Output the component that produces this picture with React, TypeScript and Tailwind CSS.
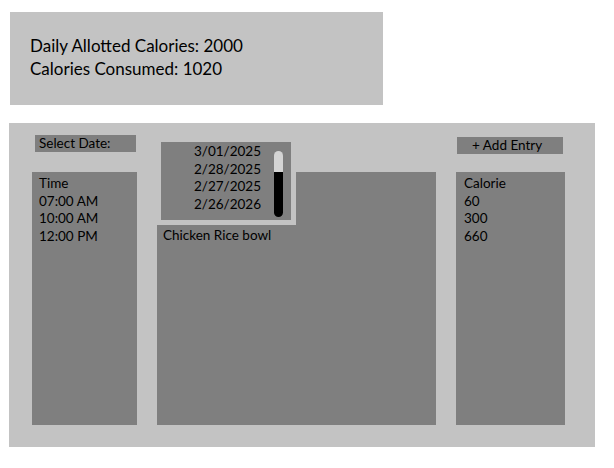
import React from "react";

const font = { fontFamily: "Lato, 'Open Sans', sans-serif" };

export default function App() {
  const times = ["Time", "07:00 AM", "10:00 AM", "12:00 PM"];
  const cals = ["Calorie", "60", "300", "660"];
  const dates = ["3/01/2025", "2/28/2025", "2/27/2025", "2/26/2026"];
  return (
    <div className="w-[614px] h-[468px] bg-white px-[9px] pt-[12px] text-black" style={font}>
      <div className="ml-[1px] w-[373px] h-[93px] bg-[#c3c3c3] pl-[20px] pt-[23px] text-[17px] leading-[22.7px]">
        <div>Daily Allotted Calories: 2000</div>
        <div>Calories Consumed: 1020</div>
      </div>
      <div className="mt-[18px] w-[586px] h-[324px] bg-[#c3c3c3] pl-[23px] pr-[30px] pb-[22px] flex gap-[20px] text-[13.5px] leading-[17.7px]">
        <div className="w-[105px] flex flex-col">
          <div className="h-[49px] pt-[12px] pl-[3px]">
            <div className="w-[101px] h-[17px] bg-[#7f7f7f] pl-[4px] leading-[17px]">Select Date:</div>
          </div>
          <div className="flex-1 bg-[#7f7f7f] pl-[7px] pt-[3px]">
            {times.map((t) => (
              <div key={t}>{t}</div>
            ))}
          </div>
        </div>
        <div className="w-[279px] flex flex-col relative">
          <div className="h-[49px]" />
          <div className="flex-1 bg-[#7f7f7f] pl-[6px] pt-[55px]">Chicken Rice bowl</div>
          <div className="absolute left-[-1px] top-[14px] border-[5px] border-[#c3c3c3]">
            <div className="w-[130px] h-[78px] bg-[#7f7f7f] relative pl-[33px] pt-[1px]">
              {dates.map((d) => (
                <div key={d}>{d}</div>
              ))}
              <div className="absolute left-[113px] top-[9px] w-[9px] flex flex-col">
                <div className="h-[21px] bg-[#d4d4d4] rounded-t-full rounded-b-[3px]" />
                <div className="h-[45px] bg-black rounded-b-full rounded-t-[2px]" />
              </div>
            </div>
          </div>
        </div>
        <div className="w-[109px] flex flex-col">
          <div className="h-[49px] pt-[14px] pl-[1px]">
            <div className="w-[106px] h-[17px] bg-[#7f7f7f] pl-[15px] leading-[17px]">+ Add Entry</div>
          </div>
          <div className="flex-1 bg-[#7f7f7f] pl-[8px] pt-[3px]">
            {cals.map((c) => (
              <div key={c}>{c}</div>
            ))}
          </div>
        </div>
      </div>
    </div>
  );
}
